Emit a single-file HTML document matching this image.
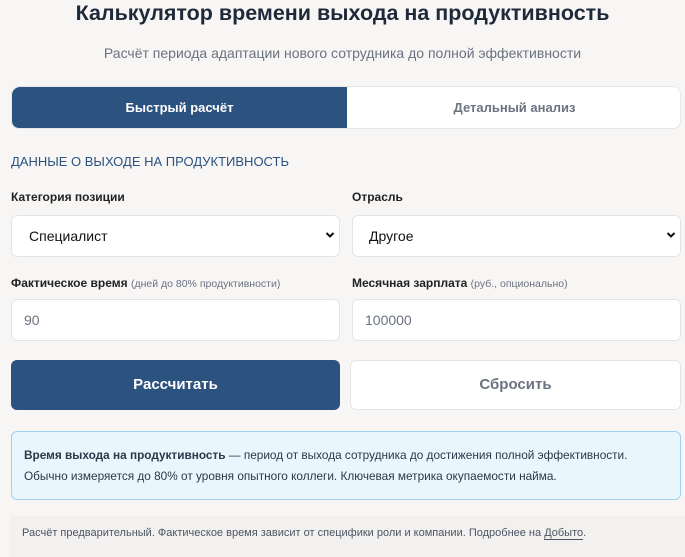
<!DOCTYPE html>
<html><head><meta charset="utf-8"><style>
*{box-sizing:border-box;margin:0;padding:0}
body{width:685px;height:557px;overflow:hidden;background:#f7f6f5;font-family:"Liberation Sans","DejaVu Sans",sans-serif;color:#1f2937;position:relative}
.a{position:absolute}
h1{position:absolute;left:0;width:685px;top:1px;text-align:center;font-size:21.5px;font-weight:bold;color:#1e2a3a}
.sub{left:0;width:685px;top:45px;text-align:center;font-size:14px;color:#6b7280}
.tabs{left:11px;top:86px;width:670px;height:43px;background:#fff;border:1px solid #e5e7eb;border-radius:8px;overflow:hidden}
.tab1{left:0;top:0;width:335px;height:43px;background:#2c5280;color:#fff;font-weight:bold;font-size:13px;text-align:center;line-height:42px;border-radius:8px 0 0 8px}
.tab2{left:335px;top:0;width:335px;height:43px;color:#6b7280;font-weight:bold;font-size:13px;text-align:center;line-height:42px}
.sec{left:11px;top:154px;font-size:13px;color:#2c5280}
.lbl{font-size:12px;color:#222;font-weight:bold}
.lbl small{font-size:10.5px;color:#6b7280;font-weight:normal}
.box{background:#fff;border:1px solid #e3e4e6;border-radius:6px;height:42px;font-size:14px;line-height:40px}
.btn{height:50px;border-radius:6px;text-align:center;line-height:50px;font-size:15px;font-weight:bold}
</style></head><body>
<h1>Калькулятор времени выхода на продуктивность</h1>
<div class="a sub">Расчёт периода адаптации нового сотрудника до полной эффективности</div>
<div class="a tabs"><div class="a tab1">Быстрый расчёт</div><div class="a tab2">Детальный анализ</div></div>
<div class="a sec">ДАННЫЕ О ВЫХОДЕ НА ПРОДУКТИВНОСТЬ</div>
<div class="a lbl" style="left:11px;top:190px">Категория позиции</div>
<div class="a lbl" style="left:352px;top:190px">Отрасль</div>
<div class="a box" style="left:11px;top:215px;width:329px;padding-left:17px;color:#111">Специалист<svg class="a" style="right:4px;top:15px" width="10" height="8" viewBox="0 0 10 8"><path d="M1.5 2l3.5 3.5L8.5 2" stroke="#111" stroke-width="2" fill="none"/></svg></div>
<div class="a box" style="left:352px;top:215px;width:329px;padding-left:16px;color:#111">Другое<svg class="a" style="right:4px;top:15px" width="10" height="8" viewBox="0 0 10 8"><path d="M1.5 2l3.5 3.5L8.5 2" stroke="#111" stroke-width="2" fill="none"/></svg></div>
<div class="a lbl" style="left:11px;top:276px">Фактическое время <small>(дней до 80% продуктивности)</small></div>
<div class="a lbl" style="left:352px;top:276px">Месячная зарплата <small>(руб., опционально)</small></div>
<div class="a box" style="left:11px;top:299px;width:329px;padding-left:12px;color:#6b7280">90</div>
<div class="a box" style="left:352px;top:299px;width:329px;padding-left:12px;color:#6b7280">100000</div>
<div class="a btn" style="left:11px;top:360px;width:329px;background:#2c5280;color:#fff">Рассчитать</div>
<div class="a btn" style="left:350px;top:360px;width:331px;background:#fff;border:1px solid #e3e4e6;color:#6b7280;line-height:48px">Сбросить</div>
<div class="a" style="left:11px;top:431px;width:670px;height:69px;background:#eaf6fd;border:1px solid #9fd0ef;border-radius:6px;padding:13px 12px;font-size:11.8px;color:#2d3748;line-height:21px">
<b>Время выхода на продуктивность</b> — период от выхода сотрудника до достижения полной эффективности.<br>Обычно измеряется до 80% от уровня опытного коллеги. Ключевая метрика окупаемости найма.</div>
<div class="a" style="left:10px;top:516px;width:675px;height:41px;background:#f2f1f0;padding:11px 12px;font-size:11px;color:#4b5563">Расчёт предварительный. Фактическое время зависит от специфики роли и компании. Подробнее на <span style="border-bottom:1px solid #4b5563">Добыто</span>.</div>
</body></html>
